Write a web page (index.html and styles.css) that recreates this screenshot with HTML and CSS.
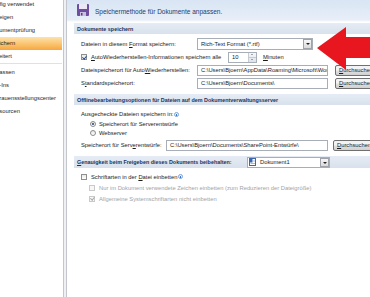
FILE: index.html
```html
<!DOCTYPE html>
<html lang="de">
<head>
<meta charset="utf-8">
<title>Word-Optionen - Speichern</title>
<link rel="stylesheet" href="styles.css">
</head>
<body>
<div class="window">
	<ul class="nav">
		<li>Häufig verwendet</li>
		<li>Anzeigen</li>
		<li>Dokumentprüfung</li>
		<li class="select">Speichern</li>
		<li>Erweitert</li>
		<li class="sep"></li>
		<li>Anpassen</li>
		<li>Add-Ins</li>
		<li>Vertrauensstellungscenter</li>
		<li>Ressourcen</li>
	</ul>
	<div class="divider"></div>
	<div class="page">
		<div class="head">
			<svg class="disk" width="12" height="12" viewBox="0 0 12 12">
				<rect x="0" y="0" width="12" height="12" rx="1" fill="#6e4f9f"/>
				<rect x="2" y="0" width="8" height="5" fill="#ece7f4"/>
				<rect x="3" y="8" width="6" height="4" fill="#cbbfe0"/>
				<rect x="4" y="9" width="1.5" height="2.5" fill="#5a3d88"/>
			</svg>
			<span>Speichermethode für Dokumente anpassen.</span>
		</div>

		<h2 class="bar">Dokumente speichern</h2>
		<div class="rows">
			<div class="row">
				<span class="lbl">Dateien in diesem <u>F</u>ormat speichern:</span>
				<div class="combo">Rich-Text Format (*.rtf)<span class="drop"></span></div>
			</div>
			<div class="row">
				<span class="autolbl"><span class="chk on"></span><span class="txt"><u>A</u>utoWiederherstellen-Informationen speichern alle</span></span>
				<div class="spin"><span class="val">10</span><span class="arrows"><i class="up"></i><i class="dn"></i></span></div>
				<span class="unit"><u>M</u>inuten</span>
			</div>
			<div class="row">
				<span class="lbl">Dateispeicherort für Auto<u>W</u>iederherstellen:</span>
				<div class="field">C:\Users\Bjoern\AppData\Roaming\Microsoft\Word\</div>
				<div class="btn"><u>D</u>urchsuchen...</div>
			</div>
			<div class="row">
				<span class="lbl">S<u>t</u>andardspeicherort:</span>
				<div class="field">C:\Users\Bjoern\Documents\</div>
				<div class="btn"><u>D</u>urchsuchen...</div>
			</div>
		</div>

		<h2 class="bar second">Offlinebearbeitungsoptionen für Dateien auf dem Dokumentverwaltungsserver</h2>
		<div class="rows offline">
			<div class="row small">Ausgecheckte Dateien speichern in:<span class="info"></span></div>
			<div class="row radio-row"><span class="radio on"></span>Speicherort für Serverentwürfe</div>
			<div class="row radio-row"><span class="radio"></span>Webserver</div>
			<div class="row server">
				<span class="lbl short">Speicherort für Serv<u>e</u>rentwürfe:</span>
				<div class="field long">C:\Users\Bjoern\Documents\SharePoint-Entwürfe\</div>
				<div class="btn near"><u>D</u>urchsuchen...</div>
			</div>
		</div>

		<h2 class="bar third">
			<span class="bartitle"><u>G</u>enauigkeit beim Freigeben dieses Dokuments beibehalten:</span>
			<span class="combo doc">
				<svg class="docicon" width="7" height="8" viewBox="0 0 7 8">
					<rect x="0.5" y="0.5" width="6" height="7" fill="#fff" stroke="#3a67b0"/>
					<rect x="0.5" y="0.5" width="3" height="4" fill="#3a67b0"/>
					<line x1="4" y1="3" x2="6" y2="3" stroke="#7b9bd0" stroke-width="0.7"/>
					<line x1="1.5" y1="5.5" x2="6" y2="5.5" stroke="#7b9bd0" stroke-width="0.7"/>
				</svg>
				Dokument1<span class="drop"></span>
			</span>
		</h2>
		<div class="rows fonts">
			<div class="row tiny"><span class="chk"></span><span class="txt">Schriftarten in der <u>D</u>atei einbetten</span><span class="info"></span></div>
			<div class="row tiny off"><span class="chk"></span><span class="txt">Nur im Dokument verwendete Zeichen einbetten (zum Reduzieren der Dateigröße)</span></div>
			<div class="row tiny off"><span class="chk on"></span><span class="txt">Allgemeine Systemschriftarten nicht einbetten</span></div>
		</div>
	</div>

	<svg class="arrow" width="54" height="45" viewBox="0 0 54 45">
		<polygon points="1,22 30,1 30,11 54,11 54,32 30,32 30,44" fill="#e8161f"/>
	</svg>
</div>
</body>
</html>
```

FILE: styles.css
```css
*{
	margin: 0;
	padding: 0;
	box-sizing: border-box;
}
body{
	font: 5.8px "Liberation Sans", Arial, sans-serif;
	color: #1b1b1b;
	background: #fff;
	overflow: hidden;
}
ul,li{
	list-style: none;
}
.window{
	position: relative;
	display: flex;
	width: 370px;
	height: 297px;
	overflow: hidden;
}

/* linke Navigation, links abgeschnitten */
.nav{
	flex: none;
	width: 79px;
	margin: -2.5px 0 0 -17px;
}
.nav li{
	height: 13px;
	line-height: 13px;
	padding-left: 6px;
	white-space: nowrap;
	color: #1e1e1e;
}
.nav li.select{
	background: linear-gradient(#fde2ad, #fbc673 50%, #f7a641);
}
.nav li.sep{
	height: 3px;
	border-top: 1px solid #dde2ea;
}
.divider{
	flex: none;
	width: 4px;
	margin-left: 1px;
	border-left: 1px solid #c3c6cc;
	border-right: 1px solid #c3c6cc;
	background: #eef0f3;
}

.page{
	flex: 1;
	min-width: 0;
	background: linear-gradient(#d9e5f4, #e7eef8 20px, #fff 22px);
}
.head{
	height: 22px;
	display: flex;
	align-items: center;
	gap: 6px;
	padding-left: 10px;
	font-size: 6.5px;
	color: #20406f;
}
.disk{
	flex: none;
	margin-top: -3px;
}

.bar{
	display: flex;
	align-items: center;
	height: 11px;
	margin: 1px 0 0 7px;
	padding-left: 3px;
	background: linear-gradient(#e5ecf5, #d8e1ec);
	font-size: 5.4px;
	font-weight: bold;
	color: #1d3358;
	white-space: nowrap;
}
.bar.second{
	margin-top: 4.5px;
}
.bar.third{
	height: 12px;
	margin-top: 4.5px;
}
.bartitle{
	width: 170px;
	flex: none;
}

.rows{
	padding: 3.5px 0 0 14px;
}
.row{
	display: flex;
	align-items: center;
	height: 13px;
	white-space: nowrap;
}
.lbl{
	width: 116px;
	flex: none;
}
.lbl.short{
	width: 85px;
}
.autolbl{
	display: flex;
	align-items: center;
	width: 147px;
	flex: none;
}

.combo{
	display: flex;
	align-items: center;
	width: 116px;
	height: 12px;
	padding-left: 3px;
	border: 1px solid #a7aeb8;
	background: #fff;
	flex: none;
}
.drop{
	position: relative;
	margin-left: auto;
	width: 9px;
	height: 10px;
	border: 1px solid #a0a4aa;
	background: linear-gradient(#f6f6f6, #dadada);
}
.drop:after{
	content: "";
	position: absolute;
	left: 2px;
	top: 3px;
	border-left: 2px solid transparent;
	border-right: 2px solid transparent;
	border-top: 2px solid #222;
}
.combo.doc{
	width: 83px;
	height: 11px;
	padding-left: 1px;
	font-weight: normal;
	font-size: 5.8px;
	color: #1b1b1b;
}
.combo.doc .drop{
	height: 9px;
}
.docicon{
	margin-right: 4px;
}

.chk{
	position: relative;
	flex: none;
	width: 6px;
	height: 6px;
	border: 1px solid #8e8f8f;
	background: linear-gradient(#e9e9e9, #fdfdfd);
}
.chk.on:after{
	content: "";
	position: absolute;
	left: 1px;
	top: -0.5px;
	width: 1.5px;
	height: 3px;
	border-right: 1px solid #2a4a86;
	border-bottom: 1px solid #2a4a86;
	transform: rotate(40deg);
}
.txt{
	margin-left: 4px;
}

.spin{
	display: flex;
	width: 29px;
	height: 11px;
	border: 1px solid #a7aeb8;
	background: #fff;
	flex: none;
}
.spin .val{
	flex: 1;
	padding-left: 3px;
	line-height: 9px;
}
.arrows{
	display: flex;
	flex-direction: column;
	width: 8px;
	border-left: 1px solid #c6cbd2;
	background: linear-gradient(#f5f7fa, #dfe4eb);
}
.arrows i{
	flex: 1;
	position: relative;
}
.arrows i.up{
	border-bottom: 1px solid #c6cbd2;
}
.arrows i:after{
	content: "";
	position: absolute;
	left: 2px;
	top: 1px;
	border-left: 1.5px solid transparent;
	border-right: 1.5px solid transparent;
}
.arrows i.up:after{
	border-bottom: 1.5px solid #555;
}
.arrows i.dn:after{
	border-top: 1.5px solid #555;
}
.unit{
	margin-left: 6px;
}

.field{
	width: 131px;
	height: 11px;
	padding-left: 3px;
	line-height: 9px;
	border: 1px solid #a7aeb8;
	background: #fff;
	overflow: hidden;
	flex: none;
}
.field.long{
	width: 162px;
}
.btn{
	flex: none;
	width: 48px;
	height: 11px;
	margin-left: 7px;
	padding-left: 3px;
	line-height: 9px;
	border: 1px solid #707070;
	border-radius: 2px;
	background: linear-gradient(#f3f3f3 45%, #dfdfdf 55%, #d0d0d0);
}
.btn.near{
	margin-left: 5px;
}

.offline{
	padding-top: 4px;
}
.row.small{
	height: 10px;
}
.row.radio-row{
	height: 9px;
}
.radio{
	position: relative;
	flex: none;
	width: 6px;
	height: 6px;
	margin: 0 3px 0 9px;
	border: 1px solid #8b8b8b;
	border-radius: 50%;
	background: linear-gradient(#e6e6e6, #fff);
}
.radio.on:after{
	content: "";
	position: absolute;
	left: 1px;
	top: 1px;
	width: 2px;
	height: 2px;
	border-radius: 50%;
	background: #1f3f73;
}
.row.server{
	margin-top: 1.5px;
}

.info{
	position: relative;
	flex: none;
	width: 5px;
	height: 5px;
	margin-left: 1px;
	border: 1px solid #7aa3d9;
	border-radius: 50%;
	background: #eef4fc;
}
.info:after{
	content: "";
	position: absolute;
	left: 1px;
	top: 1px;
	width: 1px;
	height: 2px;
	background: #3d74c4;
}

.fonts{
	padding-top: 3px;
}
.row.tiny{
	height: 11px;
}
.row.off{
	padding-left: 8px;
	color: #a3a3a3;
}
.row.off .chk{
	border-color: #c9c9c9;
	background: #f7f7f7;
}
.row.off .chk.on:after{
	border-color: #a8a8a8;
}

/* roter Hinweispfeil ueber dem Dialog */
.arrow{
	position: absolute;
	left: 316px;
	top: 26px;
}
```
